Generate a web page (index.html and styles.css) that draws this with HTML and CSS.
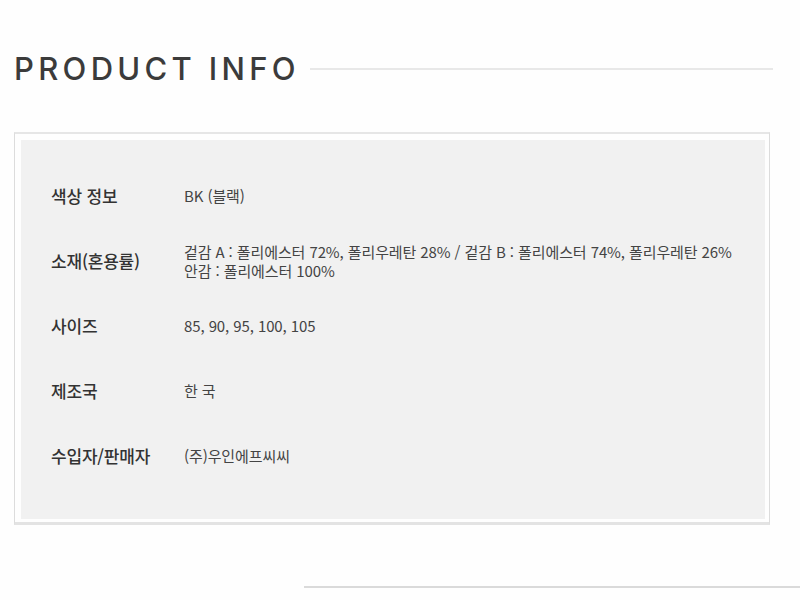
FILE: index.html
```html
<!DOCTYPE html>
<html lang="ko">
<head>
<meta charset="utf-8">
<link rel="stylesheet" href="styles.css">
</head>
<body>
<div class="page">
  <div class="heading">
    <h1 class="title">PRODUCT INFO</h1>
    <span class="rule"></span>
  </div>
  <div class="box">
    <div class="inner">
      <div class="row">
        <div class="label">색상 정보</div>
        <div class="value">BK (블랙)</div>
      </div>
      <div class="row">
        <div class="label">소재(혼용률)</div>
        <div class="value">겉감 A : 폴리에스터 72%, 폴리우레탄 28% / 겉감 B : 폴리에스터 74%, 폴리우레탄 26%<br>안감 : 폴리에스터 100%</div>
      </div>
      <div class="row">
        <div class="label">사이즈</div>
        <div class="value">85, 90, 95, 100, 105</div>
      </div>
      <div class="row">
        <div class="label">제조국</div>
        <div class="value">한 국</div>
      </div>
      <div class="row">
        <div class="label">수입자/판매자</div>
        <div class="value">(주)우인에프씨씨</div>
      </div>
    </div>
  </div>
  <div class="footer-line"></div>
</div>
</body>
</html>
```

FILE: styles.css
```css
html, body {
  margin: 0;
  padding: 0;
  background: #fefefe;
}
.page {
  width: 800px;
  height: 600px;
  overflow: hidden;
  font-family: "Noto Sans CJK KR", "Noto Sans", sans-serif;
  color: #333;
}
.heading {
  display: flex;
  align-items: center;
  padding: 52px 27px 0 14px;
  height: 34px;
}
.title {
  margin: 0;
  font-family: Inter, "Noto Sans", sans-serif;
  font-size: 31px;
  font-weight: 500;
  letter-spacing: 4.3px;
  line-height: 34px;
  color: #3b3b3b;
  white-space: nowrap;
}
.rule {
  flex: 1;
  height: 2px;
  background: #e8e8e8;
  margin-left: 10px;
}
.box {
  margin: 46px 0 0 14px;
  width: 744px;
  padding: 6px 4px 3px 6px;
  border: 1px solid #dcdcdc;
  border-top: 2px solid #e6e6e6;
  border-bottom: 3px solid #e3e3e3;
}
.inner {
  background: #f1f1f1;
  height: 356px;
  padding: 23px 0 0 30px;
  display: grid;
  grid-template-rows: 65px 65px 65px 64px 67px;
  align-content: start;
}
.row {
  display: grid;
  grid-template-columns: 133px 1fr;
  align-items: center;
}
.label {
  font-size: 17px;
  font-weight: 500;
  color: #333;
  letter-spacing: -0.2px;
}
.value {
  font-size: 15px;
  line-height: 19px;
  color: #444;
  letter-spacing: -0.1px;
}
.footer-line {
  margin: 61px 0 0 304px;
  height: 2px;
  background: #dadada;
}
```
